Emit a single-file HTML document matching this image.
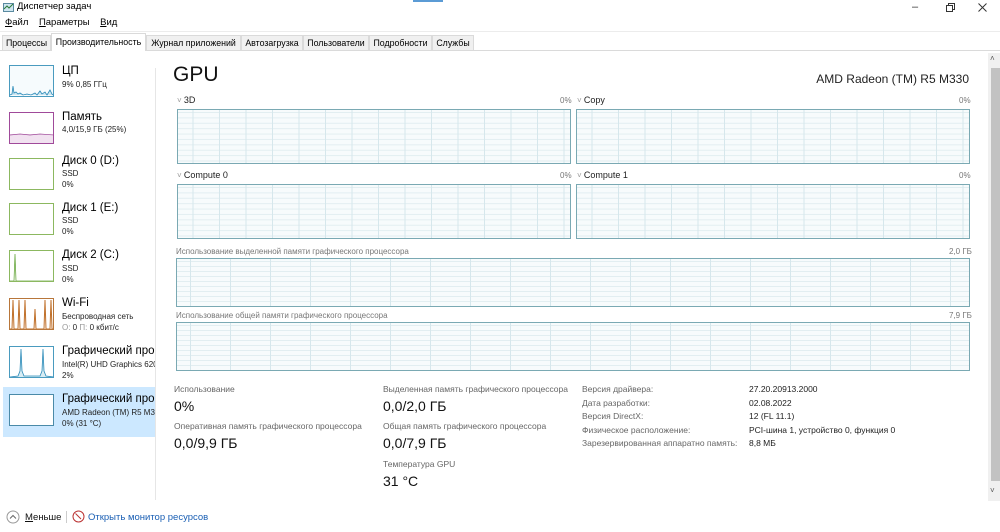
<!DOCTYPE html>
<html><head><meta charset="utf-8"><style>
*{margin:0;padding:0;box-sizing:border-box}
body{width:1000px;height:532px;background:#fff;position:relative;overflow:hidden;font-family:"Liberation Sans","DejaVu Sans",sans-serif;color:#000}
.a{position:absolute;white-space:nowrap}
.g{position:absolute;border:1px solid #7aa9b3;background-color:#f7fbfc;
background-image:linear-gradient(to right,#d6e7ec 1px,transparent 1px),linear-gradient(to bottom,#e2eef1 1px,transparent 1px);
background-size:26.5px 100%,100% 5.4px;background-position:-12px 0,0 2px}
.gm{background-size:40px 100%,100% 5px;background-position:-27px 0,0 2px}
.tab{position:absolute;top:35px;height:15px;font-size:8.8px;line-height:14px;text-align:center;border:1px solid #dadada;border-bottom:none;background:#f0f0f0;color:#000;overflow:hidden}
.th{position:absolute;left:9px;width:45px;height:32px;border:1px solid}
.t1{font-size:11.5px;width:93px;overflow:hidden}
.t2{font-size:8px;color:#222;width:93px;overflow:hidden}
.lbl{font-size:8.5px;color:#666}
.val{font-size:14px;color:#111}
.sm{font-size:8px;color:#777}
</style></head><body>
<svg class="a" style="left:3px;top:2px" width="12" height="11"><rect x="0.5" y="1.5" width="10" height="8" fill="#cfe6f0" stroke="#5a8aa0"/><polyline points="1,7 4,4 6,6 10,2" fill="none" stroke="#2b7a3b"/></svg>
<div class="a" style="left:17px;top:1px;font-size:9.5px">Диспетчер задач</div>
<div class="a" style="left:413px;top:0;width:30px;height:2px;background:#5b9bd5"></div>
<div class="a" style="left:912px;top:1px;font-size:11px;color:#333">–</div>
<svg class="a" style="left:946px;top:3px" width="9" height="9"><rect x="0.5" y="2.5" width="6" height="6" fill="none" stroke="#333"/><polyline points="2.5,2.5 2.5,0.5 8.5,0.5 8.5,6.5 6.5,6.5" fill="none" stroke="#333"/></svg>
<svg class="a" style="left:978px;top:3px" width="9" height="9"><path d="M0.5 0.5L8.5 8.5M8.5 0.5L0.5 8.5" stroke="#333"/></svg>
<div class="a" style="left:5px;top:17px;font-size:9.5px"><u>Ф</u>айл&nbsp;&nbsp;&nbsp;&nbsp;<u>П</u>араметры&nbsp;&nbsp;&nbsp;&nbsp;<u>В</u>ид</div>
<div class="a" style="left:0;top:31px;width:1000px;height:1px;background:#ececec"></div>
<div class="tab" style="left:2px;width:49px">Процессы</div>
<div class="tab" style="left:51px;width:95px;top:33px;height:18px;background:#fff;line-height:16px;z-index:2">Производительность</div>
<div class="tab" style="left:146px;width:95px">Журнал приложений</div>
<div class="tab" style="left:241px;width:62px">Автозагрузка</div>
<div class="tab" style="left:303px;width:66px">Пользователи</div>
<div class="tab" style="left:369px;width:63px">Подробности</div>
<div class="tab" style="left:432px;width:42px">Службы</div>
<div class="a" style="left:0;top:50px;width:1000px;height:1px;background:#dadada"></div>
<div class="a" style="left:155px;top:68px;width:1px;height:432px;background:#e6e6e6"></div>
<svg class="th" style="top:65px;border-color:#4a9bbf;background:#f6fbfd" width="45" height="32"><polyline points="0,29 2,28 3,20 4,27 6,26 8,28 10,27 13,29 17,28 21,29 25,27 27,29 30,25 32,28 35,26 37,29 40,24 42,28 43,29" fill="#cde6f1" stroke="#2a8ab8" stroke-width="0.8"/></svg>
<div class="a t1" style="left:62px;top:65px">ЦП</div><div class="a t2" style="left:62px;top:80px">9% 0,85 ГГц</div>
<svg class="th" style="top:112px;border-color:#a04a9a" width="45" height="32"><rect x="0" y="21" width="45" height="11" fill="#f1e2f0"/><polyline points="0,22 10,21 20,22 30,21 44,22" fill="none" stroke="#a04a9a" stroke-width="0.7"/></svg>
<div class="a t1" style="left:62px;top:111px">Память</div><div class="a t2" style="left:62px;top:125px">4,0/15,9 ГБ (25%)</div>
<div class="th" style="top:158px;border-color:#8cb860"></div>
<div class="a t1" style="left:62px;top:155px">Диск 0 (D:)</div><div class="a t2" style="left:62px;top:169px">SSD</div><div class="a t2" style="left:62px;top:180px">0%</div>
<div class="th" style="top:203px;border-color:#8cb860"></div>
<div class="a t1" style="left:62px;top:202px">Диск 1 (E:)</div><div class="a t2" style="left:62px;top:216px">SSD</div><div class="a t2" style="left:62px;top:227px">0%</div>
<svg class="th" style="top:250px;border-color:#8cb860" width="45" height="32"><polyline points="0,30 4,30 5,3 6,30 44,30" fill="none" stroke="#6aa840" stroke-width="0.8"/></svg>
<div class="a t1" style="left:62px;top:249px">Диск 2 (C:)</div><div class="a t2" style="left:62px;top:264px">SSD</div><div class="a t2" style="left:62px;top:275px">0%</div>
<svg class="th" style="top:298px;border-color:#b8763a" width="45" height="32"><polyline points="0,30 2,30 3,1 4,30 8,30 9,1 10,30 14,30 15,1 16,30 24,30 25,10 26,30 34,30 35,1 36,30 40,30 41,1 42,30 44,30" fill="none" stroke="#c0702a" stroke-width="1"/></svg>
<div class="a t1" style="left:62px;top:297px">Wi-Fi</div><div class="a t2" style="left:62px;top:312px">Беспроводная сеть</div><div class="a t2" style="left:62px;top:323px"><span style="color:#999">О:</span> 0 <span style="color:#999">П:</span> 0 кбит/с</div>
<svg class="th" style="top:346px;border-color:#4a9bbf" width="45" height="32"><polyline points="0,30 8,29 10,24 11,2 12,24 14,29 30,29 32,24 33,2 34,24 36,29 44,30" fill="#d8ecf3" stroke="#2a8ab8" stroke-width="0.8"/></svg>
<div class="a t1" style="left:62px;top:345px">Графический процессор</div><div class="a t2" style="left:62px;top:360px">Intel(R) UHD Graphics 620</div><div class="a t2" style="left:62px;top:371px">2%</div>
<div class="a" style="left:3px;top:387px;width:152px;height:50px;background:#cce8ff"></div>
<div class="th" style="top:394px;border-color:#4a8aa8;background:#fff"></div>
<div class="a t1" style="left:62px;top:393px">Графический процессор</div><div class="a t2" style="left:62px;top:408px">AMD Radeon (TM) R5 M330</div><div class="a t2" style="left:62px;top:419px">0% (31 °C)</div>
<div class="a" style="left:173px;top:63px;font-size:21px;color:#111">GPU</div>
<div class="a" style="right:31px;top:72px;font-size:12px;color:#222">AMD Radeon (TM) R5 M330</div>
<div class="a sm" style="left:177px;top:95px"><span style="color:#999">˅</span> <span style="color:#222;font-size:9px">3D</span></div>
<div class="a sm" style="left:560px;top:96px">0%</div>
<div class="a sm" style="left:577px;top:95px"><span style="color:#999">˅</span> <span style="color:#222;font-size:9px">Copy</span></div>
<div class="a sm" style="left:959px;top:96px">0%</div>
<div class="g" style="left:177px;top:109px;width:394px;height:55px"></div>
<div class="g" style="left:576px;top:109px;width:394px;height:55px"></div>
<div class="a sm" style="left:177px;top:170px"><span style="color:#999">˅</span> <span style="color:#222;font-size:9px">Compute 0</span></div>
<div class="a sm" style="left:560px;top:171px">0%</div>
<div class="a sm" style="left:577px;top:170px"><span style="color:#999">˅</span> <span style="color:#222;font-size:9px">Compute 1</span></div>
<div class="a sm" style="left:959px;top:171px">0%</div>
<div class="g" style="left:177px;top:184px;width:394px;height:55px"></div>
<div class="g" style="left:576px;top:184px;width:394px;height:55px"></div>
<div class="a sm" style="left:176px;top:247px">Использование выделенной памяти графического процессора</div>
<div class="a sm" style="left:949px;top:247px">2,0 ГБ</div>
<div class="g gm" style="left:176px;top:258px;width:794px;height:49px"></div>
<div class="a sm" style="left:176px;top:311px">Использование общей памяти графического процессора</div>
<div class="a sm" style="left:949px;top:311px">7,9 ГБ</div>
<div class="g gm" style="left:176px;top:322px;width:794px;height:49px"></div>
<div class="a lbl" style="left:174px;top:384px">Использование</div>
<div class="a val" style="left:174px;top:398px">0%</div>
<div class="a lbl" style="left:174px;top:421px">Оперативная память графического процессора</div>
<div class="a val" style="left:174px;top:435px">0,0/9,9 ГБ</div>
<div class="a lbl" style="left:383px;top:384px">Выделенная память графического процессора</div>
<div class="a val" style="left:383px;top:398px">0,0/2,0 ГБ</div>
<div class="a lbl" style="left:383px;top:421px">Общая память графического процессора</div>
<div class="a val" style="left:383px;top:435px">0,0/7,9 ГБ</div>
<div class="a lbl" style="left:383px;top:459px">Температура GPU</div>
<div class="a val" style="left:383px;top:473px">31 °C</div>
<div class="a lbl" style="left:582px;top:383px;line-height:13.5px">Версия драйвера:<br>Дата разработки:<br>Версия DirectX:<br>Физическое расположение:<br>Зарезервированная аппаратно память:</div>
<div class="a" style="left:749px;top:383px;line-height:13.5px;font-size:8.5px;color:#222">27.20.20913.2000<br>02.08.2022<br>12 (FL 11.1)<br>PCI-шина 1, устройство 0, функция 0<br>8,8 МБ</div>
<div class="a" style="left:988px;top:53px;width:12px;height:448px;background:#f0f0f0"></div>
<div class="a" style="left:991px;top:68px;width:9px;height:413px;background:#c2c2c2"></div>
<div class="a" style="left:990px;top:54px;font-size:8px;color:#555">˄</div>
<div class="a" style="left:990px;top:486px;font-size:8px;color:#555">˅</div>
<svg class="a" style="left:6px;top:510px" width="14" height="14"><circle cx="7" cy="7" r="6" fill="#fff" stroke="#999"/><polyline points="4,8.5 7,5.5 10,8.5" fill="none" stroke="#666"/></svg>
<div class="a" style="left:25px;top:512px;font-size:9.5px;color:#111"><u>М</u>еньше</div>
<div class="a" style="left:66px;top:511px;width:1px;height:12px;background:#ccc"></div>
<svg class="a" style="left:72px;top:510px" width="13" height="13"><circle cx="6.5" cy="6.5" r="5.5" fill="#fff" stroke="#b33"/><path d="M3.5 3.5L9 9" stroke="#b33"/></svg>
<div class="a" style="left:88px;top:512px;font-size:9.5px;color:#1a5fb4">Открыть монитор ресурсов</div>
</body></html>
